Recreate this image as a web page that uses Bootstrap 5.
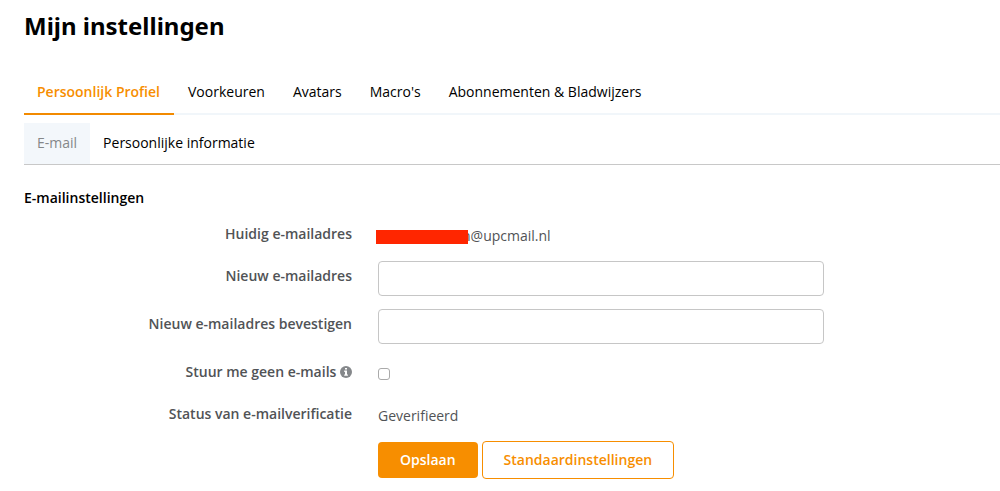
<!DOCTYPE html>
<html lang="nl">
<head>
<meta charset="utf-8">
<meta name="viewport" content="width=device-width, initial-scale=1">
<title>Mijn instellingen</title>
<link href="https://cdn.jsdelivr.net/npm/bootstrap@5.3.0/dist/css/bootstrap.min.css" rel="stylesheet">
<style>
  body { font-family: "Open Sans", sans-serif; font-size: 14px; line-height: 22px; color: #515356; background: #fff; }
  .page { padding: 8px 0 8px 24px; }
  .page-title { font-family: "Noto Sans", sans-serif; font-size: 24px; line-height: 36px; font-weight: 700; color: #000; margin-bottom: 25px; }
  .tabs-main { border-bottom: 2px solid #f1f6fa; }
  .tabs-main .nav-link { color: #000; padding: 12px 14px 10px; margin-bottom: -2px; border-bottom: 2px solid transparent; }
  .tabs-main .nav-link.active { color: #f78e00; font-weight: 600; border-color: #f28a00; padding-left: 13px; }
  .tabs-sub { border-bottom: 1px solid #c8c8c8; padding-top: 8px; }
  .tabs-sub .nav-link { color: #000; padding: 9px 13px 10px; }
  .tabs-sub .nav-link.active { color: #858789; background: #f3f7fb; }
  .section-title { font-size: 14px; line-height: 22px; font-weight: 600; color: #000; margin: 22px 0 10px; }
  .settings { display: grid; gap: 13px; }
  .setting { display: grid; grid-template-columns: minmax(120px, 328px) minmax(0, 446px); column-gap: 26px; min-height: 29px; }
  .setting-name { padding-top: 4px; font-weight: 600; text-align: right; }
  .setting-value { padding-top: 6px; }
  .setting .form-control { height: 35px; border: 1px solid #c6c6c6; border-radius: 4px; }
  .setting .form-check-input { width: 12px; height: 12px; margin: 11px 0 0; border: 1px solid #aaa; border-radius: 3px; display: block; }
  .redacted { position: relative; }
  .redacted::before { content: ""; position: absolute; left: -2px; top: 5px; width: 92px; height: 14px; background: #ff2600; }
  .address { padding-left: 84px; }
  .btn-action { font-size: 14px; line-height: 22px; font-weight: 600; border-radius: 4px; padding: 7px 21px; border: 1px solid #f78e00; }
  .btn-save, .btn-save:hover { color: #fff; background: #f78e00; border: 0; padding: 7px 22px; }
  .btn-reset { color: #f78e00; background: #fff; }
</style>
</head>
<body>
<main class="page">
  <h1 class="page-title">Mijn instellingen</h1>
  <nav class="nav tabs-main" aria-label="Instellingen">
    <a class="nav-link active" href="#" aria-current="page">Persoonlijk Profiel</a>
    <a class="nav-link" href="#">Voorkeuren</a>
    <a class="nav-link" href="#">Avatars</a>
    <a class="nav-link" href="#">Macro's</a>
    <a class="nav-link" href="#">Abonnementen &amp; Bladwijzers</a>
  </nav>
  <nav class="nav tabs-sub" aria-label="Profiel">
    <a class="nav-link active" href="#">E-mail</a>
    <a class="nav-link" href="#">Persoonlijke informatie</a>
  </nav>
  <h2 class="section-title">E-mailinstellingen</h2>
  <form class="settings">
    <div class="setting">
      <span class="setting-name">Huidig e-mailadres</span>
      <div class="setting-value"><div class="redacted"><span class="address">n@upcmail.nl</span></div></div>
    </div>
    <div class="setting">
      <label class="setting-name" for="new-mail">Nieuw e-mailadres</label>
      <input class="form-control" type="email" id="new-mail">
    </div>
    <div class="setting">
      <label class="setting-name" for="confirm-mail">Nieuw e-mailadres bevestigen</label>
      <input class="form-control" type="email" id="confirm-mail">
    </div>
    <div class="setting">
      <label class="setting-name" for="no-mail">Stuur me geen e-mails
        <svg class="align-text-top mt-1" width="12" height="12" viewBox="0 0 12 12" aria-hidden="true"><circle cx="6" cy="6" r="6" fill="#85888b"/><path d="M5 2h2v1.600H5zM4.200 4.600H7v3.800h.9V9.700H4.200V8.400H5V5.900h-.8z" fill="#fff"/></svg></label>
      <div><input class="form-check-input" type="checkbox" id="no-mail"></div>
    </div>
    <div class="setting">
      <span class="setting-name">Status van e-mailverificatie</span>
      <span class="setting-value">Geverifieerd</span>
    </div>
    <div class="setting">
      <span></span>
      <div class="d-flex align-items-center gap-1">
        <button class="btn btn-action btn-save" type="submit">Opslaan</button>
        <button class="btn btn-action btn-reset" type="button">Standaardinstellingen</button>
      </div>
    </div>
  </form>
</main>
<script src="https://cdn.jsdelivr.net/npm/bootstrap@5.3.0/dist/js/bootstrap.bundle.min.js"></script>
</body>
</html>
